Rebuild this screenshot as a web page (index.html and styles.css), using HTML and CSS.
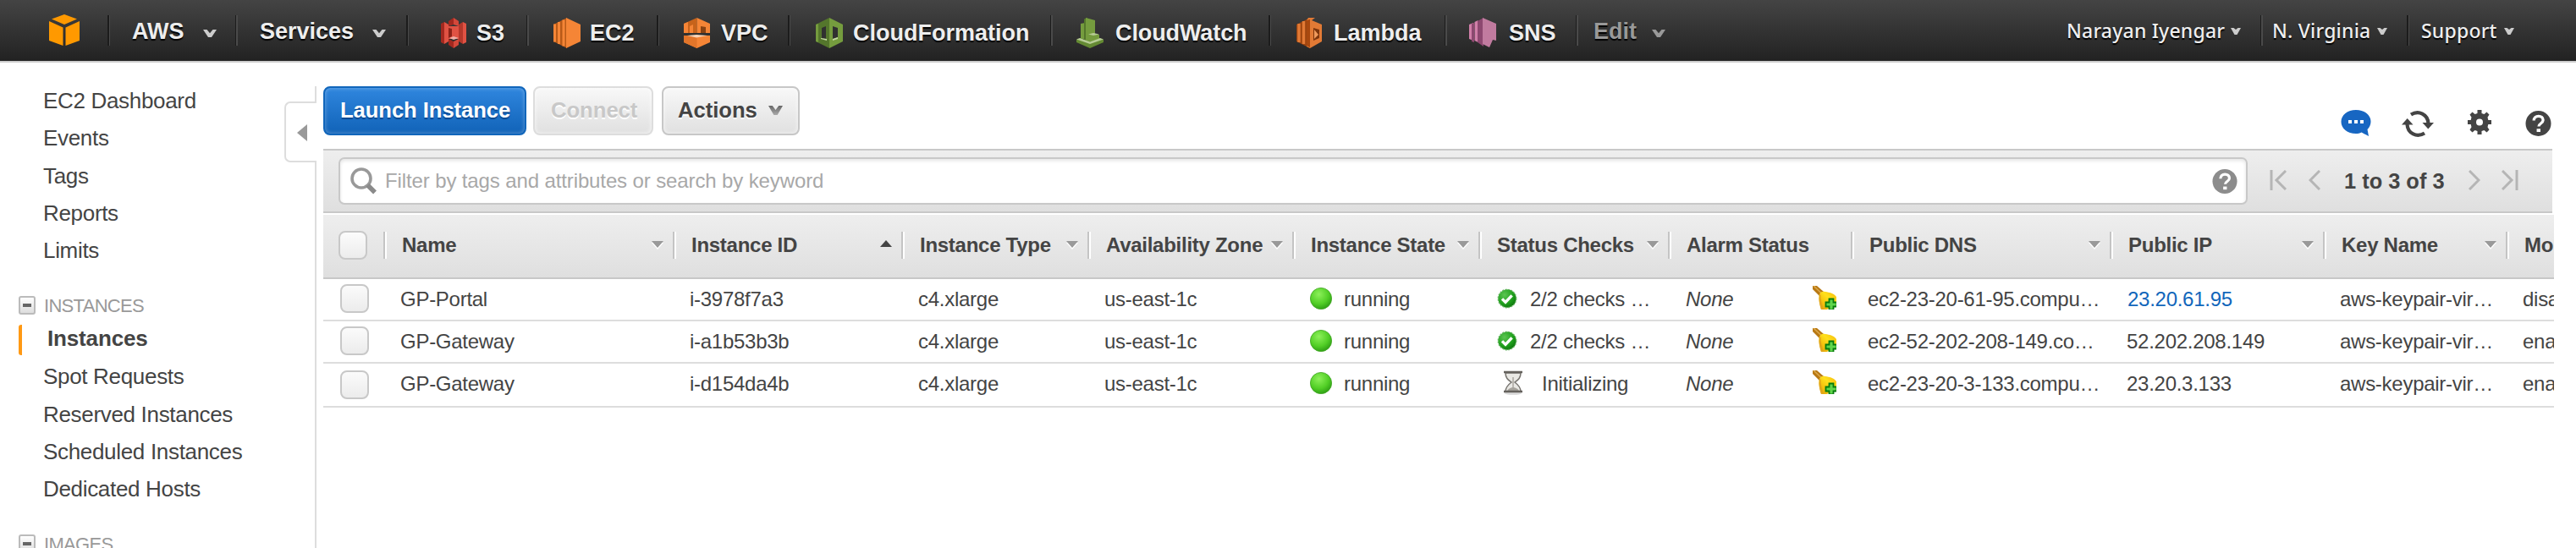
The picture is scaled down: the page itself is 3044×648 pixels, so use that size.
FILE: index.html
```html
<!DOCTYPE html>
<html lang="en">
<head>
<meta charset="utf-8">
<title>EC2 Management Console</title>
<link rel="stylesheet" href="styles.css">
</head>
<body>
<svg class="defs" aria-hidden="true">
  <defs>
    <radialGradient id="ballFill" cx="0.4" cy="0.3" r="0.75">
      <stop offset="0" stop-color="#8df05a"/><stop offset="0.6" stop-color="#52cf26"/><stop offset="1" stop-color="#2a9a12"/>
    </radialGradient>
    <radialGradient id="okFill" cx="0.35" cy="0.3" r="0.8">
      <stop offset="0" stop-color="#5cc552"/><stop offset="0.6" stop-color="#1fa01c"/><stop offset="1" stop-color="#0b6d0b"/>
    </radialGradient>
    <linearGradient id="bellFill" x1="0" y1="1" x2="1" y2="0">
      <stop offset="0" stop-color="#d99a0c"/><stop offset="0.3" stop-color="#f5c00c"/><stop offset="0.6" stop-color="#ffe01c"/><stop offset="1" stop-color="#f5b90c"/>
    </linearGradient>
    <linearGradient id="caretFill" x1="0" y1="0" x2="0" y2="1">
      <stop offset="0" stop-color="#666"/><stop offset="1" stop-color="#aaa"/>
    </linearGradient>
    <symbol id="ball" viewBox="0 0 26 26"><circle cx="13" cy="13" r="12.6" fill="url(#ballFill)" stroke="#3da51f" stroke-width=".8"/></symbol>
    <symbol id="ok" viewBox="0 0 24 24">
      <circle cx="12" cy="12" r="10.7" fill="url(#okFill)" stroke="#63b35e" stroke-width="1.4" stroke-dasharray="2 1.4"/>
      <path d="M6 12.4l4 4 7.6-8" fill="none" stroke="#fff" stroke-width="3.4"/>
    </symbol>
    <symbol id="hourglass" viewBox="0 0 24 30">
      <ellipse cx="12" cy="27" rx="10" ry="2" fill="#ddd"/>
      <path d="M3 3h18c0 6-3 8-7 11 4 3 7 6 7 11H3c0-5 3-8 7-11C6 11 3 9 3 3z" fill="#e9e8e4" stroke="#77746f" stroke-width="1.5"/>
      <path d="M5 24c2-3 5-4 7-4s5 1 7 4z" fill="#a5a29b"/>
      <path d="M12 8v12" stroke="#a5a29b" stroke-width="1.4"/>
      <path d="M1 2h22M1 25h22" stroke="#65625d" stroke-width="2.6"/>
    </symbol>
    <symbol id="bell" viewBox="0 0 28 28">
      <path d="M0 0h5l8 7-5 5-8-8z" fill="#b87813"/>
      <path d="M1 0l9 8.500" stroke="#dba84c" stroke-width="1.6"/>
      <path d="M8 10c1-3 4-4 7-3 5 1 9 1 13 6v7L17 28h-7C9 22 6 16 8 10z" fill="url(#bellFill)"/>
      <path d="M8 11c-1 6 0 12 2 17h3C11 22 9 16 9.500 10z" fill="#e0a51a"/>
      <path d="M19.500 15.500h5v4h4v5h-4v4h-5v-4h-4v-5h4z" fill="#5fd64b" stroke="#077a0c" stroke-width="1.8"/>
    </symbol>
    <symbol id="sortDown" viewBox="0 0 14 10"><path d="M0 2h14L7 10z" fill="#fff"/><path d="M0 0h14L7 8z" fill="#999"/></symbol>
    <symbol id="chev" viewBox="0 0 16 12" preserveAspectRatio="none"><path d="M0 0h4.500L8 5.500 11.500 0H16L10 12H6z"/></symbol>
    <symbol id="notch" viewBox="0 0 12 8" preserveAspectRatio="none"><path d="M0 0h3.500L6 2 8.500 0H12L7.500 8h-3z"/></symbol>
    <symbol id="query" viewBox="0 0 32 32">
      <circle cx="16" cy="16" r="15.500"/>
      <path d="M10.500 12.500c0-3.600 2.500-5.500 5.700-5.500s5.600 1.900 5.600 4.900c0 4.100-5.300 4-5.300 7.600" fill="none" stroke="#fff" stroke-width="3.400"/>
      <path d="M14 22.500h4.600v3.800H14z" fill="#fff"/>
    </symbol>
  </defs>
</svg>

<header class="nav">
  <div class="cell logo">
    <svg width="38" height="38" viewBox="0 0 38 38" fill="#f90"><path d="M4 5.500L19 0l15 5.500L19 12z"/><path d="M1 8l16.500 7.500V37L1 31z"/><path d="M37 8l-16.500 7.500V37L37 31z"/></svg>
  </div>
  <div class="cell menu aws"><span>AWS</span><svg class="chev"><use href="#chev"/></svg></div>
  <div class="cell menu services"><span>Services</span><svg class="chev"><use href="#chev"/></svg></div>
  <div class="cell svc s3">
    <svg width="30" height="36" viewBox="0 0 30 36"><path d="M0 7l4-2v26l-4-2z" fill="#a3291f"/><path d="M4 5l5 3v20l-5 3zM26 5l4 2v22l-4 2z" fill="#e05243"/><path d="M26 5l-5 3v20l5 3z" fill="#b5382b"/><path d="M9 10h12v15H9z" fill="#e05243"/><path d="M9 4l6-4v8l-6 2zM9 32l6 4v-8l-6-3z" fill="#a3291f"/><path d="M21 4l-6-4v8l6 2zM21 32l-6 4v-8l6-3z" fill="#d4483a"/><path d="M9 12l4 1v9l-4 2z" fill="#8c2318"/><path d="M10 24l5-2 6 2-6 2z" fill="#f0b0a7"/></svg>
    <span>S3</span>
  </div>
  <div class="cell svc ec2">
    <svg width="32" height="36" viewBox="0 0 32 36"><path d="M0 8l16-8v36L0 28z" fill="#b85a18"/><path d="M1.500 7.500v21M6.500 5v26M12 2.500v31" stroke="#f58536" stroke-width="3"/><path d="M15 0l17 8v20l-17 8z" fill="#f58536"/></svg>
    <span>EC2</span>
  </div>
  <div class="cell svc vpc">
    <svg width="31" height="36" viewBox="0 0 31 36"><path d="M0 7l15.500-7v18H0z" fill="#c7631b"/><path d="M0 7l5-2v13H0zM7 10l4-2v10H7z" fill="#f58536"/><path d="M15.500 0L31 7v11H15.500z" fill="#f58536"/><path d="M20 10l6 1v7h-6z" fill="#8a4312"/><path d="M0 21h31v8l-15.500 7L0 29z" fill="#f58536"/><path d="M0 21h15.500v15L0 29z" fill="#e2752a"/><path d="M4 21l11-1 13 1-13 2.500z" fill="#fbd3b4"/></svg>
    <span>VPC</span>
  </div>
  <div class="cell svc cf">
    <svg width="32" height="36" viewBox="0 0 32 36"><path d="M0 8l16-8v36L0 28z" fill="#54762c"/><path d="M0 8l3-1v22l-3-1z" fill="#759c3e"/><path d="M16 0l16 8v20l-16 8z" fill="#759c3e"/><path d="M7 12l5-2v15l-5-1zM20 10l6 2v11l-6 2z" fill="#303030"/><path d="M6 24l7 1v2l-7-2zM20 25l6-2v2l-6 2z" fill="#c3d7a2"/></svg>
    <span>CloudFormation</span>
  </div>
  <div class="cell svc cw">
    <svg width="32" height="36" viewBox="0 0 32 36"><path d="M5 7l5-1v19H5z" fill="#759c3e"/><path d="M9 1.500L13 0v29H9z" fill="#54762c"/><path d="M11 0l11 3v24l-11 2z" fill="#759c3e"/><path d="M0 26l5-2 11 5 11-5 5 2v3l-16 7-16-7z" fill="#648a33"/><path d="M14 20h13v7l-13 2z" fill="#759c3e"/><path d="M0 25.500l4-1.500 12 4.500L28 24l4 1.500-16 5.500zM14 19.500l6-1.500 7 1.500-7 1.500z" fill="#b7cc95"/></svg>
    <span>CloudWatch</span>
  </div>
  <div class="cell svc lambda">
    <svg width="30" height="36" viewBox="0 0 30 36"><path d="M0 8L16 0v36L0 28z" fill="#9d4510"/><path d="M3 7v22M8.500 4v27" stroke="#e27a35" stroke-width="3.400"/><path d="M14 0h8l-4 3 12 5v20l-14 8-4-2V3z" fill="#e27a35"/><path d="M12 3l4-1v33l-4-2z" fill="#a8480f"/><path d="M20 12l7 2v10l-7 3z" fill="#7d350c"/><path d="M21 14l5 6-5 5z" fill="#f09a5c"/></svg>
    <span>Lambda</span>
  </div>
  <div class="cell svc sns">
    <svg width="32" height="36" viewBox="0 0 32 36"><path d="M0 8l5-2v21l-5-2z" fill="#d17fa9"/><path d="M3 7l3-1v23l-3-1z" fill="#8d4870"/><path d="M6.500 5l4-2v26l-4-2z" fill="#d17fa9"/><path d="M10 4l7-4v34l-7-5z" fill="#8d4870"/><path d="M16 0l16 7v20l-4-1-4 9-8-4z" fill="#c17b9f"/></svg>
    <span>SNS</span>
  </div>
  <div class="cell menu edit"><span>Edit</span><svg class="chev"><use href="#chev"/></svg></div>
  <div class="cell acct user"><span>Narayan Iyengar</span><svg class="chev"><use href="#notch"/></svg></div>
  <div class="cell acct region"><span>N. Virginia</span><svg class="chev"><use href="#notch"/></svg></div>
  <div class="cell acct support"><span>Support</span><svg class="chev"><use href="#notch"/></svg></div>
</header>

<div class="page">
  <nav class="side">
    <div class="toggle"><svg width="12" height="20" viewBox="0 0 12 20"><path d="M12 0v20L0 10z" fill="#999"/></svg></div>
    <a class="item">EC2 Dashboard</a>
    <a class="item">Events</a>
    <a class="item">Tags</a>
    <a class="item">Reports</a>
    <a class="item">Limits</a>
    <div class="group"><i class="minus"></i>INSTANCES</div>
    <a class="item current"><span>Instances</span></a>
    <a class="item">Spot Requests</a>
    <a class="item">Reserved Instances</a>
    <a class="item">Scheduled Instances</a>
    <a class="item">Dedicated Hosts</a>
    <div class="group"><i class="minus"></i>IMAGES</div>
  </nav>

  <main class="main">
    <div class="actions">
      <button class="btn primary">Launch Instance</button>
      <button class="btn disabled">Connect</button>
      <button class="btn more">Actions<svg class="chev"><use href="#chev"/></svg></button>
      <div class="tools">
        <svg width="36" height="32" viewBox="0 0 36 32"><path d="M18 0c10 0 17.500 6 17.500 14 0 3.500-1.700 7-4 9l1.500 8-8.500-4.500C22.500 27.500 20 28 18 28 8 28 .5 22 .5 14S8 0 18 0z" fill="#1766c2"/><path d="M9 12h4v4H9zM16 12h4v4h-4zM23 12h4v4h-4z" fill="#fff"/></svg>
        <svg class="refresh" width="38" height="31" viewBox="0 0 38 31"><path d="M11 4.500C20-1 31 4 31.500 15M27 26.500C18 32 7 27 6.500 16" fill="none" stroke="#444" stroke-width="4.200"/><path d="M24.500 14H38l-6.700 7.500zM0 16.500h13.500L6.700 9z" fill="#444"/></svg>
        <svg class="gear" width="28" height="30" viewBox="0 0 28 30"><path d="M11.500 0h5v4l3 1 3-2.500 3 3-2 3.200.8 3.300H28v5h-3.700l-.8 3.300 2 3.200-3 3-3-2.500-3 1v4h-5v-4l-3-1-3 2.500-3-3 2-3.200-.8-3.300H0v-5h3.700l.8-3.300-2-3.200 3-3L8.500 5l3-1zM14 10.500a4 4 0 1 0 0 8 4 4 0 0 0 0-8z" fill="#444" fill-rule="evenodd"/></svg>
        <svg class="help" width="31" height="32" fill="#444"><use href="#query"/></svg>
      </div>
    </div>

    <div class="filter">
      <div class="search">
        <svg class="lens" width="32" height="32" viewBox="0 0 32 32"><circle cx="13" cy="13" r="11" fill="none" stroke="#999" stroke-width="3.600"/><path d="M20.500 21l8.500 8.500" stroke="#8a8a8a" stroke-width="5.500"/></svg>
        <span>Filter by tags and attributes or search by keyword</span>
        <svg class="hint" width="30" height="31" fill="#8c8c8c"><use href="#query"/></svg>
      </div>
      <div class="pager">
        <svg width="20" height="24" viewBox="0 0 20 24"><path d="M2 0v24M19 1L8 12l11 11"/></svg>
        <svg class="prev" width="14" height="24" viewBox="0 0 14 24"><path d="M13 1L2 12l11 11"/></svg>
        <b>1 to 3 of 3</b>
        <svg class="next" width="14" height="24" viewBox="0 0 14 24"><path d="M1 1l11 11L1 23"/></svg>
        <svg class="last" width="20" height="24" viewBox="0 0 20 24"><path d="M18 0v24M1 1l11 11L1 23"/></svg>
      </div>
    </div>

    <div class="grid head">
      <div><i class="box"></i></div>
      <div>Name<svg class="sort"><use href="#sortDown"/></svg></div>
      <div>Instance ID<svg class="sort up" viewBox="0 0 14 8"><path d="M0 8h14L7 0z" fill="#444"/></svg></div>
      <div>Instance Type<svg class="sort"><use href="#sortDown"/></svg></div>
      <div>Availability Zone<svg class="sort"><use href="#sortDown"/></svg></div>
      <div>Instance State<svg class="sort"><use href="#sortDown"/></svg></div>
      <div>Status Checks<svg class="sort"><use href="#sortDown"/></svg></div>
      <div>Alarm Status</div>
      <div>Public DNS<svg class="sort"><use href="#sortDown"/></svg></div>
      <div>Public IP<svg class="sort"><use href="#sortDown"/></svg></div>
      <div>Key Name<svg class="sort"><use href="#sortDown"/></svg></div>
      <div>Mo</div>
    </div>
    <div class="grid row">
      <div><i class="box"></i></div><div>GP-Portal</div><div>i-3978f7a3</div><div>c4.xlarge</div><div>us-east-1c</div>
      <div class="state"><svg><use href="#ball"/></svg>running</div>
      <div class="check"><svg><use href="#ok"/></svg>2/2 checks …</div>
      <div class="alarm"><em>None</em><svg><use href="#bell"/></svg></div>
      <div>ec2-23-20-61-95.compu…</div><div><a class="link">23.20.61.95</a></div><div>aws-keypair-vir…</div><div>disa</div>
    </div>
    <div class="grid row">
      <div><i class="box"></i></div><div>GP-Gateway</div><div>i-a1b53b3b</div><div>c4.xlarge</div><div>us-east-1c</div>
      <div class="state"><svg><use href="#ball"/></svg>running</div>
      <div class="check"><svg><use href="#ok"/></svg>2/2 checks …</div>
      <div class="alarm"><em>None</em><svg><use href="#bell"/></svg></div>
      <div>ec2-52-202-208-149.co…</div><div>52.202.208.149</div><div>aws-keypair-vir…</div><div>ena</div>
    </div>
    <div class="grid row final">
      <div><i class="box"></i></div><div>GP-Gateway</div><div>i-d154da4b</div><div>c4.xlarge</div><div>us-east-1c</div>
      <div class="state"><svg><use href="#ball"/></svg>running</div>
      <div class="check wait"><svg><use href="#hourglass"/></svg>Initializing</div>
      <div class="alarm"><em>None</em><svg><use href="#bell"/></svg></div>
      <div>ec2-23-20-3-133.compu…</div><div>23.20.3.133</div><div>aws-keypair-vir…</div><div>ena</div>
    </div>
  </main>
</div>
</body>
</html>
```

FILE: styles.css
```css
* { box-sizing: border-box; }
body {
  margin: 0;
  height: 648px;
  overflow: hidden;
  background: #fff;
  color: #444;
  font: 24px "Liberation Sans", Arial, sans-serif;
}
svg { display: block; flex: none; }
.defs { position: absolute; width: 0; height: 0; }

/* top navigation */
.nav {
  display: flex;
  height: 74px;
  border-bottom: 2px solid #ccc;
  background: linear-gradient(#444, #222);
  color: #eee;
}
.cell {
  display: flex;
  align-items: center;
  flex: none;
  height: 72px;
  white-space: nowrap;
  font-size: 27px;
  font-weight: bold;
  line-height: 30px;
  text-shadow: 0 2px 1px #000;
  background: linear-gradient(90deg, #1c1c1c 50%, #4a4a4a 50%) 0 18px / 3px 36px no-repeat;
}
.cell .chev { width: 16px; height: 9px; fill: #ccc; margin-top: 5px; }
.logo { width: 127px; padding-left: 57px; background: none; }
.menu { padding-top: 2px; }
.svc { padding-top: 5px; }
.aws { width: 151px; padding-left: 29px; }
.aws span { width: 84px; }
.services { width: 202px; padding-left: 29px; }
.services span { width: 133px; }
.s3 { width: 142px; padding-left: 41px; gap: 12px; }
.ec2 { width: 154px; padding-left: 32px; gap: 11px; }
.vpc { width: 155px; padding-left: 32px; gap: 13px; }
.cf { width: 310px; padding-left: 33px; gap: 12px; }
.cw { width: 258px; padding-left: 31px; gap: 14px; letter-spacing: -.1px; }
.lambda { width: 208px; padding-left: 33px; gap: 14px; }
.sns { width: 155px; padding-left: 29px; gap: 15px; }
.edit { width: 560px; padding-left: 21px; color: #999; }
.edit span { width: 69px; }
.edit .chev { fill: #999; }
.acct {
  font: 500 23px/30px "Noto Sans", sans-serif;
  padding-bottom: 1px;
  letter-spacing: .2px;
}
.acct .chev { width: 12px; height: 8px; margin-top: 3px; }
.user { width: 249px; padding-left: 20px; background: none; }
.user span { width: 194px; }
.region { width: 173px; padding-left: 14px; }
.region span { width: 124px; }
.support { padding-left: 17px; }
.support span { width: 98px; }

/* body split */
.page { display: flex; height: 574px; }
.side {
  position: relative;
  flex: none;
  width: 374px;
  padding: 23px 0 0 51px;
  overflow: hidden;
  font-size: 26px;
  letter-spacing: -.32px;
}
.side::before, .side::after {
  content: "";
  position: absolute;
  right: 0;
  width: 2px;
  background: #ddd;
}
.side::before { top: 28px; height: 18px; }
.side::after { top: 117px; bottom: 0; }
.toggle {
  position: absolute;
  left: 336px;
  top: 46px;
  width: 38px;
  height: 72px;
  padding: 25px 0 0 13px;
  border: 2px solid #ddd;
  border-right: 0;
  border-radius: 7px 0 0 7px;
}
.item { display: block; height: 44.3px; line-height: 44px; }
.group {
  display: flex;
  align-items: center;
  gap: 10px;
  height: 34px;
  margin: 26.5px 0 0 -29px;
  font-size: 22px;
  letter-spacing: -.7px;
  color: #999;
}
.minus {
  display: flex;
  align-items: center;
  justify-content: center;
  width: 20px;
  height: 22px;
  margin-top: -2px;
  border: 2px solid #bbb;
  border-radius: 3px;
  background: linear-gradient(#fff, #ddd);
}
.minus::after { content: ""; width: 10px; height: 4px; background: #666; }
.current { margin-left: -29px; padding-top: 5px; font-weight: bold; letter-spacing: -.15px; }
.current span {
  display: block;
  height: 36px;
  line-height: 33px;
  padding-left: 30px;
  border-left: 4px solid #ff9914;
  border-radius: 3px 0 0 3px;
}

/* main column */
.main { flex: none; width: 2636px; margin-left: 8px; overflow: hidden; }
.actions { display: flex; height: 102px; padding-top: 28px; }
.btn {
  display: flex;
  align-items: center;
  flex: none;
  height: 58px;
  padding: 0 0 2px 19px;
  border: 2px solid #c7c7c7;
  border-radius: 8px;
  background: linear-gradient(#f8f8f8, #e0e0e0);
  box-shadow: inset 0 0 5px rgba(255, 255, 255, .8);
  color: #444;
  font: bold 25.6px "Liberation Sans", Arial, sans-serif;
  text-shadow: 0 2px 0 #fff;
}
.primary {
  width: 240px;
  padding-left: 18px;
  border-color: #1166bb;
  background: linear-gradient(#2f86de, #1163b8);
  box-shadow: inset 0 0 5px rgba(255, 255, 255, .35);
  color: #fff;
  text-shadow: 0 2px 1px #0a4890;
  letter-spacing: -.05px;
}
.disabled { width: 142px; margin-left: 8px; border-color: #ddd; color: #c8c8c8; }
.more { width: 163px; margin-left: 10px; padding-left: 17px; }
.more .chev { width: 17px; height: 11px; margin-left: 13px; fill: url(#caretFill); }
.tools { display: flex; margin: 28px 0 0 1821px; }
.refresh { margin: 1px 0 0 36px; }
.gear { margin: 0 0 0 40px; }
.help { margin-left: 40px; }

.filter {
  display: flex;
  width: 2634px;
  height: 76px;
  padding: 8px 0 0 18px;
  border-top: 2px solid #c8c8c8;
  border-bottom: 2px solid #c8c8c8;
  background: linear-gradient(#eee, #dfdfdf);
}
.search {
  display: flex;
  align-items: center;
  width: 2256px;
  height: 56px;
  padding: 0 10px 0 12px;
  border: 2px solid #c8c8c8;
  border-radius: 7px;
  background: #fff;
  box-shadow: inset 0 2px 4px #e4e4e4;
  color: #a8a8a8;
  letter-spacing: -.12px;
}
.search span { margin-left: 9px; }
.hint { margin-left: auto; }
.pager { display: flex; padding: 15px 0 0 26px; }
.pager svg { fill: none; stroke: #b5b5b5; stroke-width: 3; }
.pager b { width: 119px; margin-left: 28px; font-size: 25.400px; line-height: 26px; white-space: nowrap; }
.pager .prev { margin-left: 26px; }
.pager .next { margin-left: 28px; }
.pager .last { margin-left: 25px; }

/* instance table */
.grid {
  display: grid;
  grid-template-columns: 71px 342px 270px 220px 242px 220px 224px 216px 306px 252px 216px 57px;
  white-space: nowrap;
  letter-spacing: -.27px;
}
.grid > div { display: flex; align-items: center; overflow: hidden; padding-left: 20px; }
.head {
  height: 78px;
  border-top: 2px solid #fff;
  border-bottom: 2px solid #c8c8c8;
  background: linear-gradient(#eee, #dfdfdf);
  font-weight: bold;
}
.head > div {
  padding: 0 11px 2px 22px;
  background: linear-gradient(90deg, #c4c4c4 50%, #fff 50%) 0 20px / 4px 32px no-repeat;
}
.head > div:first-child { padding: 0 0 2px 18px; background: none; }
.head > div:last-child { padding-right: 0; }
.sort { width: 14px; height: 10px; margin-left: auto; }
.up { height: 8px; margin-top: -4px; }
.row { height: 50px; border-bottom: 2px solid #ddd; }
.row.final { height: 52px; }
.row > div { height: 48px; }
.row > div:first-child { height: auto; padding-bottom: 2px; }
.row.final > div:first-child { padding-bottom: 0; }
.box {
  width: 34px;
  height: 34px;
  border: 2px solid #c8c8c8;
  border-radius: 8px;
  background: linear-gradient(#fbfbfb, #ececec);
}
.row .state { padding-left: 21px; }
.state svg { width: 26px; height: 26px; margin: -3px 14px 0 0; }
.row .check { padding-left: 22px; }
.check svg { width: 24px; height: 24px; margin: -3px 15px 0 0; }
.row .wait { padding-left: 29px; }
.wait svg { width: 24px; height: 30px; margin: -3px 22px 0 0; }
.row .alarm { padding-left: 21px; }
.alarm svg { width: 28px; height: 28px; margin: -5px 17px 0 auto; }
.link { color: #1166bb; margin-left: 1px; }
```
